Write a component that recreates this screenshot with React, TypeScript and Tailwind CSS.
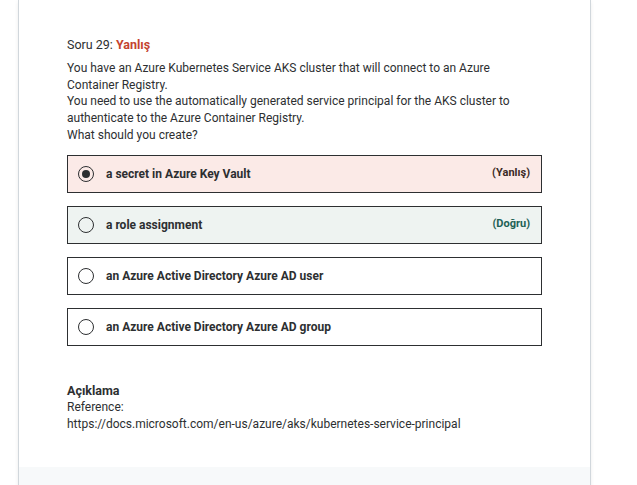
import { useState } from "react";

const options = [
  { text: "a secret in Azure Key Vault", state: "wrong" },
  { text: "a role assignment", state: "right" },
  { text: "an Azure Active Directory Azure AD user", state: "none" },
  { text: "an Azure Active Directory Azure AD group", state: "none" },
];

const App = () => {
  const [selected] = useState(0);

  return (
    <div className="h-[485px] overflow-hidden bg-white font-['Roboto',sans-serif] text-[#2d2f31]">
      <div className="ml-[18px] w-[573px] border-x border-[#d1d7dc] shadow-[0_2px_4px_rgba(0,0,0,0.08)]">
        <div className="px-[48px] pt-[36px] pb-[35px]">
          {/* Question header */}
          <div className="text-[12.5px] leading-[17px]">
            Soru 29: <span className="font-bold text-[#c4432f]">Yanlış</span>
          </div>
          <div className="mt-[7px] text-[12px] leading-[16.7px]">
            <p>
              You have an Azure Kubernetes Service AKS cluster that will connect to an Azure
              <br />
              Container Registry.
            </p>
            <p>
              You need to use the automatically generated service principal for the AKS cluster to
              <br />
              authenticate to the Azure Container Registry.
            </p>
            <p>What should you create?</p>
          </div>

          {/* Options */}
          <ul className="mt-[11px] flex w-[475px] flex-col gap-[13px]">
            {options.map((o, i) => (
              <li
                key={i}
                className={`flex h-[38px] items-center border border-[#2d2f31] px-[11px] ${
                  o.state === "wrong"
                    ? "bg-[#fbeae7]"
                    : o.state === "right"
                    ? "bg-[#eef3f1]"
                    : "bg-white"
                }`}
              >
                <span className="ml-[-1px] flex h-[16px] w-[16px] items-center justify-center rounded-full border-[1.5px] border-[#2d2f31]">
                  {selected === i && <span className="h-[8px] w-[8px] rounded-full bg-[#2d2f31]" />}
                </span>
                <span className="ml-[12px] text-[12px] font-bold">{o.text}</span>
                {o.state === "wrong" && (
                  <span className="ml-auto text-[11px] font-bold text-[#3a2a25]">(Yanlış)</span>
                )}
                {o.state === "right" && (
                  <span className="ml-auto text-[11px] font-bold text-[#1e6055]">(Doğru)</span>
                )}
              </li>
            ))}
          </ul>

          {/* Explanation */}
          <div className="mt-[37px] text-[12.5px] leading-[16px]">
            <div className="font-bold">Açıklama</div>
            <div className="text-[12px]">Reference:</div>
            <div className="mt-[1px] text-[12px]">https://docs.microsoft.com/en-us/azure/aks/kubernetes-service-principal</div>
          </div>
        </div>
        <div className="h-[40px] bg-[#f7f9fa]" />
      </div>
    </div>
  );
};

export default App;
